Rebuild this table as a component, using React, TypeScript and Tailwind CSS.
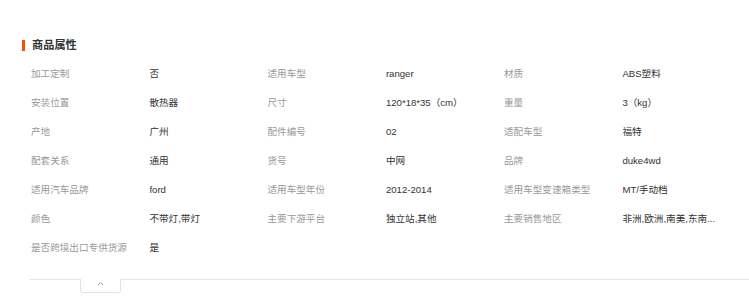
import React from 'react';

const rows: [string, string][][] = [
  [['加工定制', '否'], ['适用车型', 'ranger'], ['材质', 'ABS塑料']],
  [['安装位置', '散热器'], ['尺寸', '120*18*35（cm）'], ['重量', '3（kg）']],
  [['产地', '广州'], ['配件编号', '02'], ['适配车型', '福特']],
  [['配套关系', '通用'], ['货号', '中网'], ['品牌', 'duke4wd']],
  [['适用汽车品牌', 'ford'], ['适用车型年份', '2012-2014'], ['适用车型变速箱类型', 'MT/手动档']],
  [['颜色', '不带灯,带灯'], ['主要下游平台', '独立站,其他'], ['主要销售地区', '非洲,欧洲,南美,东南...']],
  [['是否跨境出口专供货源', '是']],
];

const App: React.FC = () => {
  return (
    <div className="w-[749px] h-[306px] bg-white overflow-hidden font-['Liberation_Sans','Noto_Sans_CJK_SC',sans-serif]">
      <div className="pt-[37px] pl-[22px] flex items-center h-[53px]">
        <div className="w-[3px] h-[11px] bg-[#ff4a00]"></div>
        <h2 className="ml-[7px] text-[11.2px] leading-[16px] font-bold text-[#333]">商品属性</h2>
      </div>

      <div className="mt-[6px] pl-[31px]">
        {rows.map((row, i) => (
          <div key={i} className="flex h-[29px] items-center text-[9.6px] leading-[12px]">
            {row.map(([label, value]) => (
              <div key={label} className="flex w-[236.5px] shrink-0">
                <span className="w-[118.4px] shrink-0 text-[#999] whitespace-nowrap">{label}</span>
                <span className="w-[118px] text-[#333] whitespace-nowrap">{value}</span>
              </div>
            ))}
          </div>
        ))}
      </div>

      <div className="mt-[17px] pl-[30px] flex items-start">
        <div className="w-[50px] h-px bg-[#e3e3e3]"></div>
        <div className="w-[41px] h-[14px] border-x border-b border-[#e3e3e3] rounded-b-[3px] flex justify-center pt-[2px]">
          <svg width="7" height="5" viewBox="0 0 7 5">
            <polyline points="1,4 3.5,1.5 6,4" fill="none" stroke="#8a9bb0" strokeWidth="1" />
          </svg>
        </div>
        <div className="flex-1 h-px bg-[#e3e3e3]"></div>
      </div>
    </div>
  );
};

export default App;
